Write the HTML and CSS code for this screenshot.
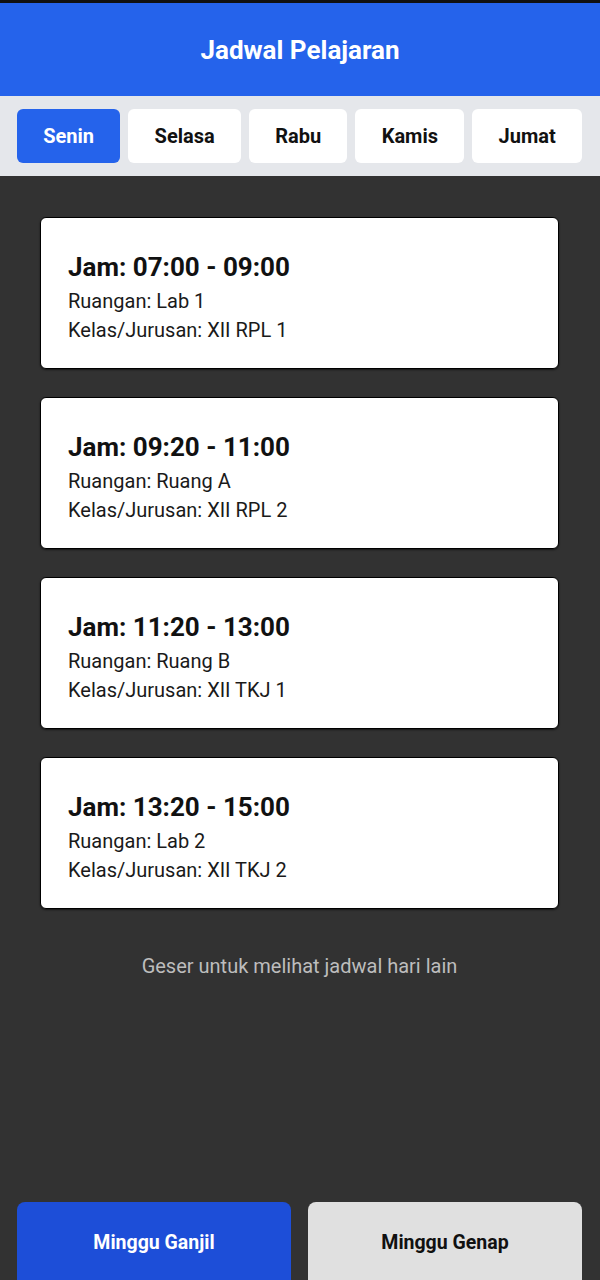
FILE: index.html
```html
<!DOCTYPE html>
<html lang="id">
<head>
<meta charset="utf-8">
<title>Jadwal Pelajaran</title>
<link rel="stylesheet" href="styles.css">
</head>
<body>
<div class="app">
  <header class="header">
    <h1 class="title">Jadwal Pelajaran</h1>
  </header>
  <nav class="tabs">
    <button class="tab tab-active">Senin</button>
    <button class="tab">Selasa</button>
    <button class="tab">Rabu</button>
    <button class="tab">Kamis</button>
    <button class="tab">Jumat</button>
  </nav>
  <main class="content">
    <div class="cards">
      <div class="card">
        <div class="card-title">Jam: 07:00 - 09:00</div>
        <div class="card-line">Ruangan: Lab 1</div>
        <div class="card-line">Kelas/Jurusan: XII RPL 1</div>
      </div>
      <div class="card">
        <div class="card-title">Jam: 09:20 - 11:00</div>
        <div class="card-line">Ruangan: Ruang A</div>
        <div class="card-line">Kelas/Jurusan: XII RPL 2</div>
      </div>
      <div class="card">
        <div class="card-title">Jam: 11:20 - 13:00</div>
        <div class="card-line">Ruangan: Ruang B</div>
        <div class="card-line">Kelas/Jurusan: XII TKJ 1</div>
      </div>
      <div class="card">
        <div class="card-title">Jam: 13:20 - 15:00</div>
        <div class="card-line">Ruangan: Lab 2</div>
        <div class="card-line">Kelas/Jurusan: XII TKJ 2</div>
      </div>
    </div>
    <p class="hint">Geser untuk melihat jadwal hari lain</p>
  </main>
  <footer class="actions">
    <button class="week week-odd">Minggu Ganjil</button>
    <button class="week week-even">Minggu Genap</button>
  </footer>
</div>
</body>
</html>
```

FILE: styles.css
```css
* { box-sizing: border-box; }
html, body {
  margin: 0;
  padding: 0;
  background: #323232;
}
body {
  font-family: Roboto, "Liberation Sans", sans-serif;
  overflow: hidden;
}
.app {
  height: 1280px;
  display: flex;
  flex-direction: column;
  overflow: hidden;
}
.header {
  background: #2563eb;
  border-top: 3px solid #111;
  height: 96px;
  display: flex;
  align-items: center;
  justify-content: center;
  flex: none;
}
.title {
  margin: 0;
  color: #fff;
  font-size: 26px;
  font-weight: 700;
  line-height: 30px;
  padding-top: 1px;
}
.tabs {
  flex: none;
  background: #e5e7eb;
  height: 80px;
  padding: 13px 18px 13px 17px;
  display: flex;
  gap: 8px;
}
.tab {
  flex: 1 1 auto;
  border: none;
  border-radius: 6px;
  background: #fff;
  color: #111;
  font-family: inherit;
  font-size: 20px;
  font-weight: 700;
  padding: 0 20px;
  height: 54px;
}
.tab-active {
  background: #2563eb;
  color: #fff;
}
.content {
  flex: 1;
  background: #323232;
  padding: 41px 41px 0 40px;
}
.cards {
  display: flex;
  flex-direction: column;
  gap: 28px;
}
.card {
  background: #fff;
  border: 1px solid #000;
  border-radius: 6px;
  height: 152px;
  padding: 32px 27px 0;
  box-shadow: 0 1px 2px rgba(0,0,0,0.6);
}
.card-title {
  font-size: 26px;
  font-weight: 700;
  line-height: 34px;
  color: #111;
  margin-bottom: 3px;
}
.card-line {
  font-size: 20px;
  line-height: 29px;
  color: #1a1a1a;
}
.hint {
  margin: 45px 0 0;
  text-align: center;
  color: #bdbdbd;
  font-size: 20px;
  line-height: 24px;
}
.actions {
  flex: none;
  display: flex;
  gap: 17px;
  padding: 0 18px 0 17px;
  margin-bottom: -8px;
}
.week {
  flex: 1;
  height: 86px;
  border: none;
  border-radius: 8px;
  font-family: inherit;
  font-size: 19.5px;
  font-weight: 700;
  padding-bottom: 6px;
}
.week-odd {
  background: #1d4ed8;
  color: #fff;
}
.week-even {
  background: #e0e0e0;
  color: #111;
}
```
